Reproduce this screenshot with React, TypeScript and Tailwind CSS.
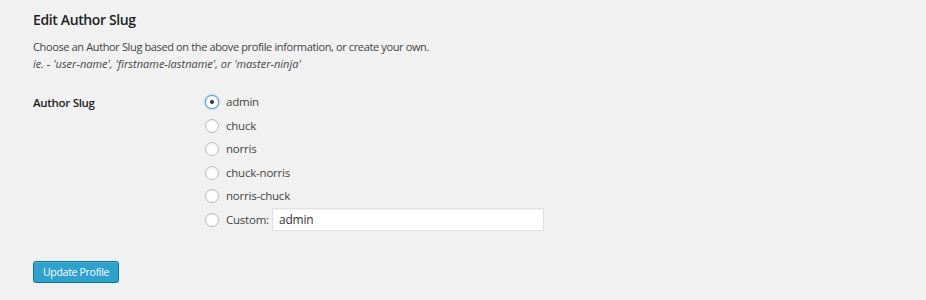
const options = ["admin", "chuck", "norris", "chuck-norris", "norris-chuck"];

function Radio({ checked }: { checked?: boolean }) {
  return (
    <span
      className={`w-[14px] h-[14px] rounded-full border flex items-center justify-center shrink-0 ${
        checked
          ? "border-[#5b9dd9] bg-white shadow-[0_0_2px_rgba(30,140,190,0.8)]"
          : "border-[#bbb] bg-white shadow-[inset_0_1px_2px_rgba(0,0,0,0.07)]"
      }`}
    >
      {checked && <span className="w-[4px] h-[4px] rounded-full bg-[#333]" />}
    </span>
  );
}

export default function App() {
  return (
    <div
      className="w-[926px] h-[300px] bg-[#f1f1f1] text-[#444] pl-[33px] pt-[10px]"
      style={{ fontFamily: '"Open Sans", sans-serif' }}
    >
      <h2 className="text-[14px] font-semibold text-[#222] leading-[20px] tracking-[-0.37px]">
        Edit Author Slug
      </h2>
      <p className="mt-[8px] text-[11px] leading-[17px] tracking-[-0.37px]">
        Choose an Author Slug based on the above profile information, or create your own.
        <br />
        <i className="tracking-[0px]">ie. - 'user-name', 'firstname-lastname', or 'master-ninja'</i>
      </p>

      <div className="mt-[21px] flex">
        <div className="w-[172px] text-[11.5px] font-semibold text-[#222] leading-[18px] pt-[1px] tracking-[-0.3px]">
          Author Slug
        </div>
        <div className="flex flex-col gap-[5.5px] text-[11.5px] tracking-[-0.22px]">
          {options.map((o, i) => (
            <label key={o} className="flex items-center gap-[7px] h-[18px]">
              <Radio checked={i === 0} />
              <span>{o}</span>
            </label>
          ))}
          <label className="flex items-center gap-[7px] h-[18px]">
            <Radio />
            <span>Custom:</span>
            <span className="ml-[-4px] w-[272px] h-[23px] bg-white border border-[#e2e2e2] shadow-[inset_0_1px_2px_rgba(0,0,0,0.07)] px-[6px] flex items-center text-[12px] tracking-[-0.2px] text-[#333]">
              admin
            </span>
          </label>
        </div>
      </div>

      <button className="mt-[32px] h-[22px] px-[9px] bg-[#2ea2cc] border border-[#0074a2] rounded-[3px] text-white text-[10.5px] leading-[20px] tracking-[-0.3px] shadow-[inset_0_1px_0_rgba(120,200,230,0.5)]">
        Update Profile
      </button>
    </div>
  );
}
